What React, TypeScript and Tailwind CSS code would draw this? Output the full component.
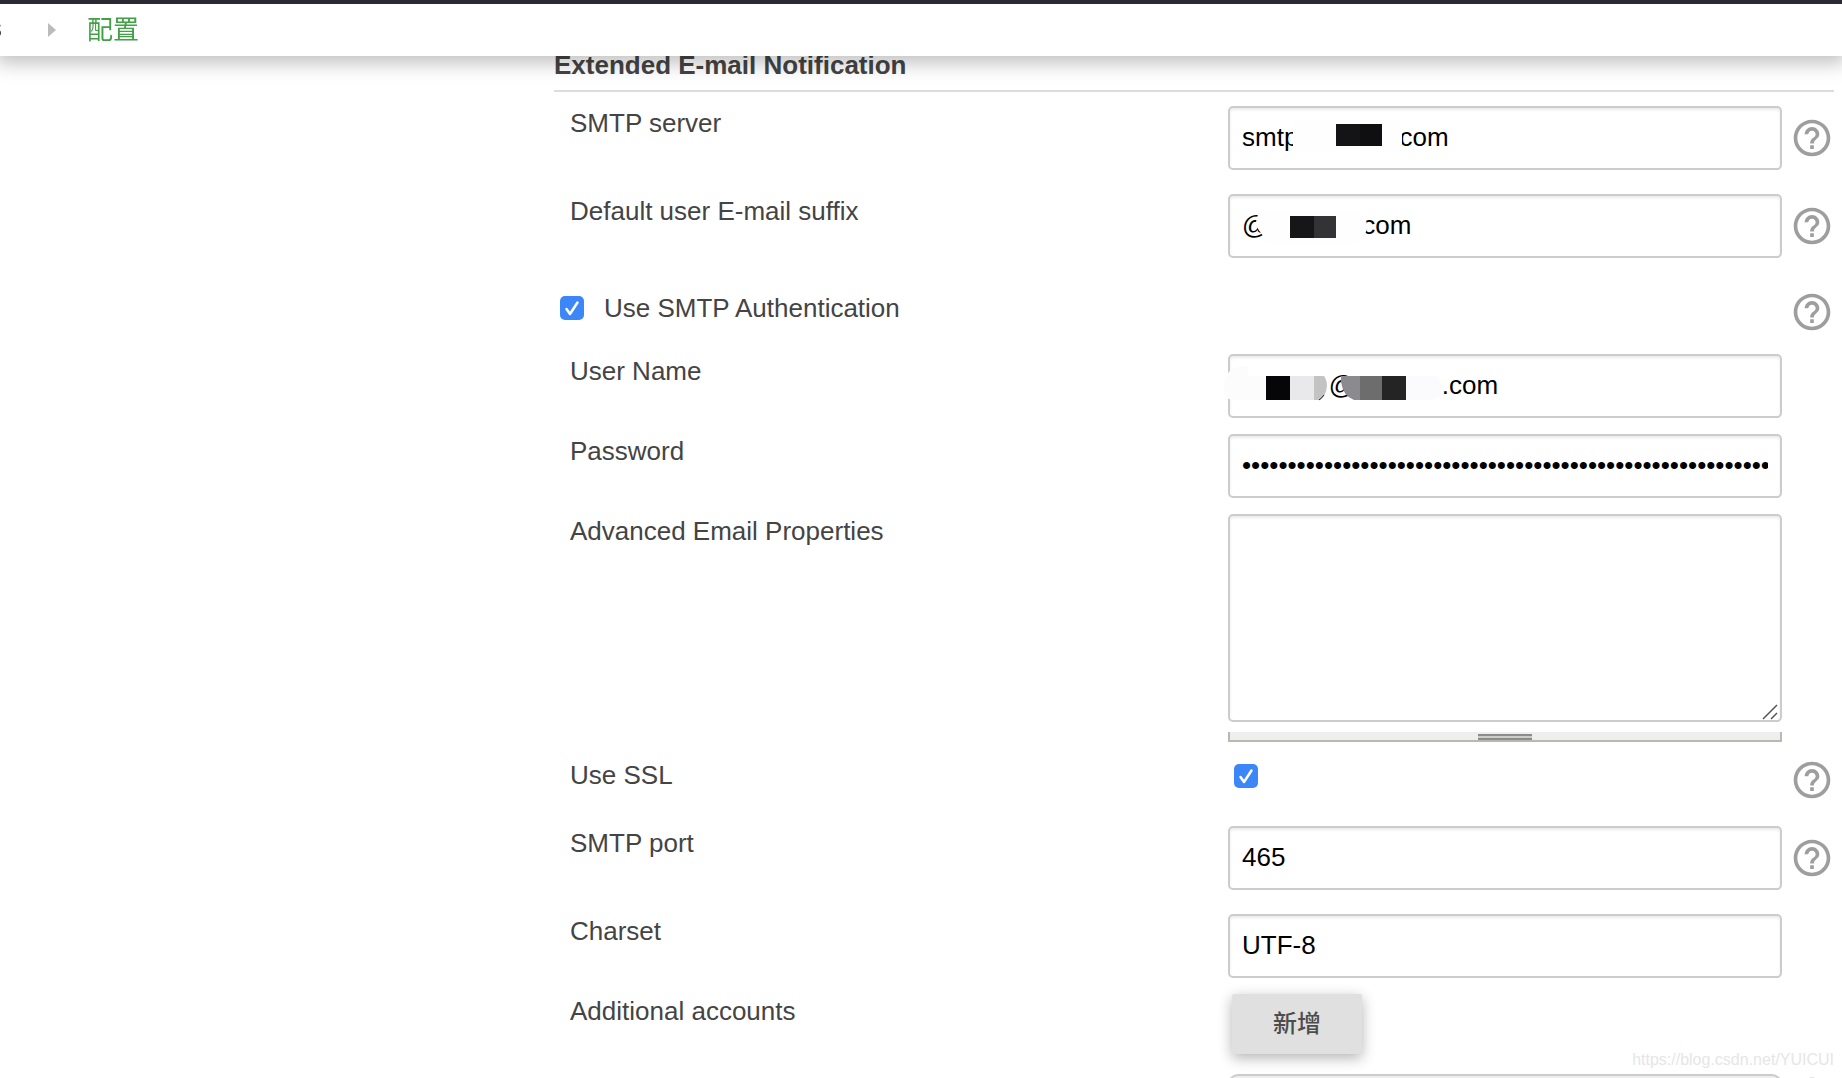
import { ReactNode } from "react";
import { clsx } from "clsx";

const space = (n: number) => "\u00a0".repeat(n);

export default function App() {
	return <div className="relative h-screen overflow-hidden bg-white font-['Liberation_Sans','Noto_Sans_CJK_SC',sans-serif] text-[26px] text-[#444]">
		<Breadcrumbs />

		<main className="pl-[554px] pr-2 pt-12">
			<h1 className="mb-[14px] border-b-2 border-[#ddd] pb-2 font-bold leading-[34px]">
				Extended E-mail Notification
			</h1>

			<form>
				<Row id="server" label="SMTP server" help className="pb-6">
					<TextInput id="server" value={"smtp" + space(14) + "com"} />
					<Overlay>
						<path d="M67 14H166Q174 16 174 30V46H70Q71 41 65 41V22Z" fill="#fefefe" />
						<rect x="108" y="18" width="46" height="22" fill="#141416" />
						<rect x="132" y="18" width="22" height="22" fill="#0f0f11" />
					</Overlay>
				</Row>

				<Row id="suffix" label="Default user E-mail suffix" help className="pb-8">
					<TextInput id="suffix" value={"@" + space(13) + "com"} />
					<Overlay>
						<path d="M31 16H130Q138 22 139 30Q140 42 128 50H40L34 40Q28 34 28 28Z" fill="#fefefe" />
						<rect x="62" y="22" width="46" height="22" fill="#161618" />
						<rect x="86" y="22" width="22" height="22" fill="#333335" />
					</Overlay>
				</Row>

				<div className="flex items-start pb-5">
					<label className="flex flex-1 items-center gap-5 pl-1.5 leading-9">
						<Checkbox id="auth" />
						Use SMTP Authentication
					</label>
					<div className="flex w-[52px] justify-end">
						<HelpButton label="Use SMTP Authentication" />
					</div>
				</div>

				<Row id="user" label="User Name" className="pb-4">
					<TextInput id="user" value={space(12) + "@" + space(12) + ".com"} />
					<Overlay>
						<path d="M-4 30Q-2 14 14 12H20V22H38V46H4Q-4 44 -4 36Z" fill="#fcfcfc" />
						<rect x="38" y="22" width="24" height="24" fill="#060608" />
						<rect x="62" y="22" width="24" height="24" fill="#e9e9eb" />
						<path d="M86 22H96Q99 26 99 32Q98 42 92 46H86Z" fill="#c3c3c3" />
						<path d="M91 46Q94 44 96 41" fill="none" stroke="#222" />
						<path d="M113 22H132V46H126Q115 42 113 28Z" fill="#8b8b8d" />
						<rect x="132" y="22" width="22" height="24" fill="#6d6d6d" />
						<rect x="154" y="22" width="24" height="24" fill="#242424" />
						<path d="M178 22H210Q214 28 214 34Q213 43 206 46H178Z" fill="#fbfbfd" />
					</Overlay>
				</Row>

				<Row id="password" label="Password" className="pb-4">
					<TextInput id="password" type="password" value={"x".repeat(58)} />
				</Row>

				<Row id="props" label="Advanced Email Properties" className="pb-4">
					<textarea
						id="props"
						name="props"
						className="block h-[208px] w-full resize-none rounded-[5px] border-2 border-[#ccc] px-3 py-2 text-black shadow-[inset_0_2px_3px_rgba(0,0,0,0.08)] outline-none"
					/>
					<svg className="pointer-events-none absolute right-1 top-[190px] h-4 w-4" viewBox="0 0 16 16" stroke="#555" strokeWidth="1.5">
						<path d="M1 15L15 1M9 15L15 9" />
					</svg>
					<div className="mt-2.5 flex h-2.5 justify-center border-x-2 border-b-2 border-[#bbb8b0] bg-[#eee] pt-0.5">
						<div className="h-1.5 w-[54px] border-y-2 border-[#8c8c8c] bg-[#ccc]" />
					</div>
				</Row>

				<Row id="ssl" label="Use SSL" help className="pb-6">
					<div className="flex h-9 items-center pl-1.5">
						<Checkbox id="ssl" />
					</div>
				</Row>

				<Row id="port" label="SMTP port" help className="pb-6">
					<TextInput id="port" value="465" />
				</Row>

				<Row id="charset" label="Charset" className="pb-4">
					<TextInput id="charset" value="UTF-8" />
				</Row>

				<Row id="accounts" label="Additional accounts" className="pb-5">
					<button
						id="accounts"
						type="button"
						className="ml-1 block h-[60px] w-[130px] rounded-xs bg-[#e0e0e0] text-2xl font-medium text-[#4d4d4d] shadow-[0_4px_14px_rgba(0,0,0,0.3)]"
					>
						新增
					</button>
				</Row>

				<Row id="type" label="" help>
					<select
						id="type"
						aria-label="Default Content Type"
						className="block h-10 w-full appearance-none rounded-[10px] border-2 border-[#ccc] bg-[#eee]"
					/>
				</Row>
			</form>
		</main>

		<div className="absolute bottom-1.5 right-2 text-base text-[#e6e6e6]">
			https://blog.csdn.net/YUICUI
		</div>
	</div>
}

const Breadcrumbs = () => {
	return <header className="fixed inset-x-0 top-0 z-10 flex h-14 items-center border-t-4 border-[#2b2931] bg-white pb-1 shadow-[0_3px_18px_4px_rgba(0,0,0,0.25)]">
		<a href="#" className="flex w-0.5 justify-end overflow-hidden">s</a>
		<svg className="ml-[46px] mt-1 h-4 w-2" viewBox="0 0 8 16" fill="#bbb">
			<path d="M0 1V15L8 8Z" />
		</svg>
		<a href="#" className="ml-[31px] font-['Noto_Sans_CJK_SC',sans-serif] leading-9 text-[#43a047]">配置</a>
	</header>
}

interface RowProps {
	id: string;
	label: string;
	help?: boolean;
	className?: string;
	children: ReactNode;
}

const Row = ({ id, label, help, className, children }: RowProps) => {
	return <div className={clsx("grid grid-cols-[674fr_554fr_52px]", className)}>
		<label htmlFor={id} className="pl-4 leading-[34px]">{label}</label>
		<div className="relative min-w-0">{children}</div>
		<div className="flex items-center justify-end">
			{help && <HelpButton label={label} />}
		</div>
	</div>
}

const TextInput = ({ id, value, type = "text" }: { id: string; value: string; type?: string }) => {
	return <input
		id={id}
		name={id}
		type={type}
		defaultValue={value}
		className="block h-16 w-full rounded-[5px] border-2 border-[#ccc] bg-white px-3 pb-0.5 text-black shadow-[inset_0_2px_3px_rgba(0,0,0,0.08)] outline-none"
	/>
}

// masks the private part of a value
const Overlay = ({ children }: { children: ReactNode }) => {
	return <svg className="pointer-events-none absolute left-0 top-0 h-16 w-60 overflow-visible" viewBox="0 0 240 64">
		{children}
	</svg>
}

const Checkbox = ({ id }: { id: string }) => {
	return <span className="relative block h-6 w-6">
		<input
			id={id}
			name={id}
			type="checkbox"
			defaultChecked
			className="peer block h-6 w-6 appearance-none rounded-[5px] border border-[#bbb] checked:border-0 checked:bg-[#3b87f8]"
		/>
		<svg
			className="pointer-events-none absolute inset-0 hidden h-6 w-6 peer-checked:block"
			viewBox="0 0 24 24"
			fill="none"
			stroke="#fff"
			strokeWidth="2.5"
			strokeLinecap="round"
			strokeLinejoin="round"
		>
			<path d="M6.5 13L10 18L17.5 6.5" />
		</svg>
	</span>
}

const HelpButton = ({ label }: { label: string }) => {
	return <button type="button" aria-label={`Help for ${label}`} className="block h-11 w-11 shrink-0">
		<svg viewBox="0 0 24 24" className="h-11 w-11" fill="#9e9e9e">
			<path d="M11 18h2v-2h-2v2zm1-16C6.48 2 2 6.48 2 12s4.48 10 10 10 10-4.48 10-10S17.52 2 12 2zm0 18c-4.41 0-8-3.59-8-8s3.59-8 8-8 8 3.59 8 8-3.59 8-8 8zm0-14c-2.21 0-4 1.79-4 4h2c0-1.1.9-2 2-2s2 .9 2 2c0 2-3 1.75-3 5h2c0-2.25 3-2.5 3-5 0-2.21-1.79-4-4-4z" />
		</svg>
	</button>
}
